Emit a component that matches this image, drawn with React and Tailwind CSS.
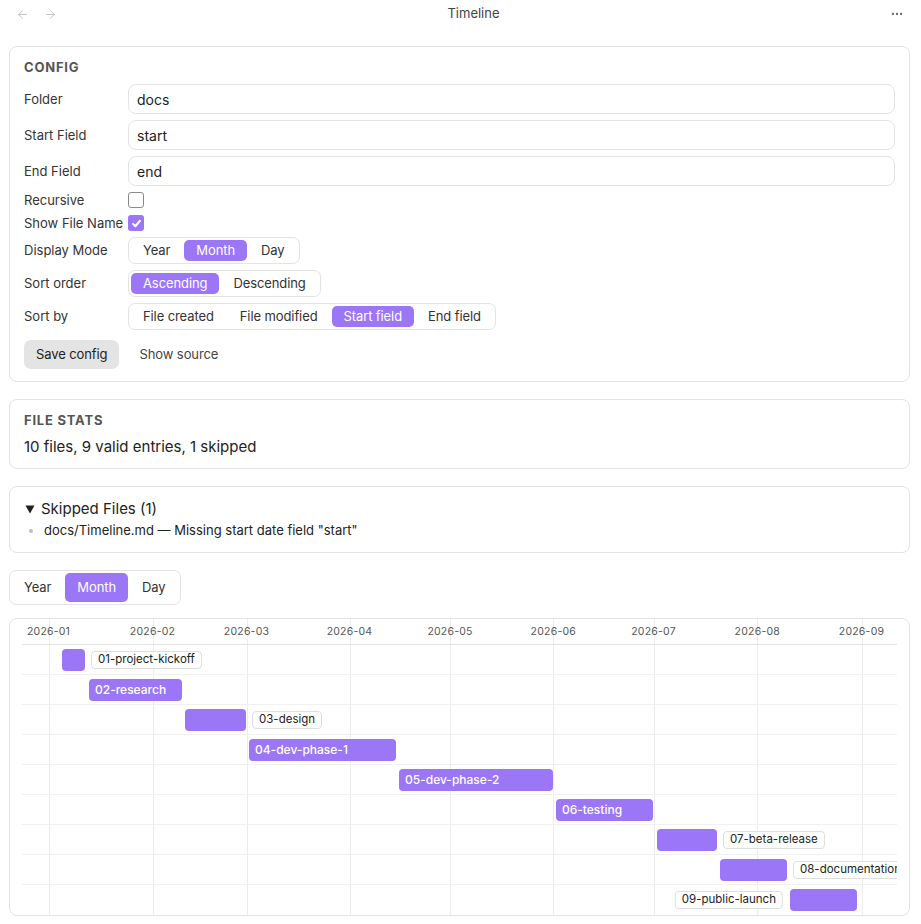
import React from "react";
import { ArrowLeft, ArrowRight, MoreHorizontal } from "lucide-react";

function Seg({ items, active, tall }) {
  return (
    <div className="inline-flex items-center gap-[2px] p-[2px] border border-[#e3e3e3] rounded-[7px] bg-white">
      {items.map((it) => (
        <div
          key={it}
          className={
            (it === active ? "bg-[#9b76f6] text-white " : "text-[#333] ") +
            (tall ? "h-[29px] " : "h-[21px] ") +
            "px-[12px] rounded-[5px] flex items-center text-[13px] tracking-[-0.1px] leading-none"
          }
        >
          {it}
        </div>
      ))}
    </div>
  );
}

function Row({ label, children, h, mt }) {
  return (
    <div className={"flex items-center " + h + " " + mt}>
      <div className="w-[104px] shrink-0 text-[13px] text-[#333] pt-[1px]">{label}</div>
      {children}
    </div>
  );
}

function Input({ value }) {
  return (
    <div className="flex-1 h-[30px] border border-[#e3e3e3] rounded-[8px] px-[8px] flex items-center text-[14px] text-[#222]">
      {value}
    </div>
  );
}

const ticks = [
  ["2026-01", 26.5],
  ["2026-02", 130.5],
  ["2026-03", 224.5],
  ["2026-04", 327.5],
  ["2026-05", 428],
  ["2026-06", 531.3],
  ["2026-07", 631.5],
  ["2026-08", 735.3],
  ["2026-09", 839.5],
];

const bars = [
  { name: "01-project-kickoff", left: 40, width: 23, label: "right" },
  { name: "02-research", left: 67, width: 93, label: "inside" },
  { name: "03-design", left: 163, width: 61, label: "right" },
  { name: "04-dev-phase-1", left: 227, width: 147, label: "inside" },
  { name: "05-dev-phase-2", left: 377, width: 154, label: "inside" },
  { name: "06-testing", left: 534, width: 97, label: "inside" },
  { name: "07-beta-release", left: 635, width: 60, label: "right" },
  { name: "08-documentation", left: 698, width: 67, label: "right" },
  { name: "09-public-launch", left: 768, width: 67, label: "left" },
];

function Timeline() {
  return (
    <div className="mt-[13px] border border-[#e3e3e3] rounded-[8px] px-[12px] bg-white">
      <div className="relative overflow-hidden">
        {ticks.map(([t, x]) => (
          <div
            key={t}
            className="absolute top-0 bottom-0 w-px bg-[#ececec]"
            style={{ left: x }}
          />
        ))}
        <div className="relative h-[26px] border-b border-[#e3e3e3]">
          {ticks.map(([t, x]) => (
            <div
              key={t}
              className="absolute top-0 h-[25px] flex items-center -translate-x-1/2 text-[10.5px] text-[#555] tracking-[0.02em] whitespace-nowrap"
              style={{ left: x }}
            >
              {t}
            </div>
          ))}
        </div>
        {bars.map((b, i) => (
          <div
            key={b.name}
            className={
              "relative h-[30px] " +
              (i < bars.length - 1 ? "border-b border-[#f1f1f1]" : "")
            }
          >
            <div
              className="absolute top-[4px] h-[22px] rounded-[4px] bg-[#9b76f6] overflow-hidden"
              style={{ left: b.left, width: b.width }}
            >
              {b.label === "inside" && (
                <div className="px-[6px] leading-[22px] text-[12px] font-medium text-white whitespace-nowrap">
                  {b.name}
                </div>
              )}
            </div>
            {b.label === "right" && (
              <div
                className="absolute top-[6px] h-[18px] px-[6px] flex items-center border border-[#dedede] rounded-[4px] bg-white text-[11.5px] text-[#222] whitespace-nowrap"
                style={{ left: b.left + b.width + 6 }}
              >
                {b.name}
              </div>
            )}
            {b.label === "left" && (
              <div
                className="absolute top-[6px] h-[18px] px-[6px] flex items-center border border-[#dedede] rounded-[4px] bg-white text-[11.5px] text-[#222] whitespace-nowrap -translate-x-full"
                style={{ left: b.left - 7 }}
              >
                {b.name}
              </div>
            )}
          </div>
        ))}
      </div>
    </div>
  );
}

export default function App() {
  return (
    <div
      className="w-full min-h-[924px] bg-white text-[#222]"
      style={{ fontFamily: "Inter, 'Noto Sans', sans-serif" }}
    >
      {/* header */}
      <div className="flex items-center h-[28px]">
        <div className="w-[70px] pl-[16px] flex items-center gap-[15px] text-[#b5b5b5]">
          <ArrowLeft size={13} strokeWidth={1.5} />
          <ArrowRight size={13} strokeWidth={1.5} />
        </div>
        <div className="flex-1 text-center text-[13px] text-[#444]">Timeline</div>
        <div className="w-[44px] flex justify-end pr-[17px] text-[#666]">
          <MoreHorizontal size={14} strokeWidth={2} />
        </div>
      </div>

      <div className="pl-[9px] pr-[11px] pt-[18px] pb-[8px]">
        {/* config */}
        <div className="border border-[#e3e3e3] rounded-[8px] px-[14px] pt-[13px] pb-[12px] flex flex-col">
          <div className="h-[16px] flex items-center text-[13px] font-bold tracking-[0.06em] text-[#555]">
            CONFIG
          </div>
          <Row label="Folder" h="h-[30px]" mt="mt-[8px]">
            <Input value="docs" />
          </Row>
          <Row label="Start Field" h="h-[30px]" mt="mt-[6px]">
            <Input value="start" />
          </Row>
          <Row label="End Field" h="h-[30px]" mt="mt-[6px]">
            <Input value="end" />
          </Row>
          <Row label="Recursive" h="h-[16px]" mt="mt-[6px]">
            <div className="w-[16px] h-[16px] border border-[#8a8a8a] rounded-[3px] bg-white" />
          </Row>
          <Row label="Show File Name" h="h-[16px]" mt="mt-[7px]">
            <div className="w-[16px] h-[16px] rounded-[3px] bg-[#9b76f6] flex items-center justify-center">
              <svg width="11" height="11" viewBox="0 0 12 12">
                <path
                  d="M2.2 6.4 L4.8 9 L9.8 3"
                  fill="none"
                  stroke="white"
                  strokeWidth="2.2"
                  strokeLinecap="round"
                  strokeLinejoin="round"
                />
              </svg>
            </div>
          </Row>
          <Row label="Display Mode" h="h-[26px]" mt="mt-[6px]">
            <Seg items={["Year", "Month", "Day"]} active="Month" />
          </Row>
          <Row label="Sort order" h="h-[26px]" mt="mt-[7px]">
            <Seg items={["Ascending", "Descending"]} active="Ascending" />
          </Row>
          <Row label="Sort by" h="h-[26px]" mt="mt-[7px]">
            <Seg
              items={["File created", "File modified", "Start field", "End field"]}
              active="Start field"
            />
          </Row>
          <div className="flex items-center mt-[11px] h-[29px] gap-[8px]">
            <div className="h-[29px] px-[12px] rounded-[7px] bg-[#e4e4e4] flex items-center text-[13px] tracking-[-0.1px] text-[#222]">
              Save config
            </div>
            <div className="h-[29px] px-[12px] flex items-center text-[13px] tracking-[-0.1px] text-[#444]">
              Show source
            </div>
          </div>
        </div>

        {/* file stats */}
        <div className="mt-[17px] border border-[#e3e3e3] rounded-[8px] px-[14px] pt-[13px] pb-[11px]">
          <div className="h-[16px] flex items-center text-[13px] font-bold tracking-[0.06em] text-[#555]">
            FILE STATS
          </div>
          <div className="mt-[8px] h-[20px] flex items-center text-[15px] text-[#222]">
            10 files, 9 valid entries, 1 skipped
          </div>
        </div>

        {/* skipped */}
        <div className="mt-[17px] border border-[#e3e3e3] rounded-[8px] px-[14px] pt-[12px] pb-[12px]">
          <div className="h-[20px] flex items-center text-[15px] text-[#222]">
            <svg width="10" height="9" viewBox="0 0 10 9" className="ml-[1px] mr-[6px]">
              <path d="M0.5 0.5 H9.5 L5 8.5 Z" fill="#222" />
            </svg>
            Skipped Files (1)
          </div>
          <div className="mt-[3px] h-[18px] flex items-center text-[13px] text-[#222]">
            <div className="w-[4px] h-[4px] rounded-full bg-[#bdbdbd] ml-[5px] mr-[11px]" />
            docs/Timeline.md — Missing start date field "start"
          </div>
        </div>

        {/* toggle */}
        <div className="mt-[17px]">
          <Seg items={["Year", "Month", "Day"]} active="Month" tall />
        </div>

        <Timeline />
      </div>
    </div>
  );
}
